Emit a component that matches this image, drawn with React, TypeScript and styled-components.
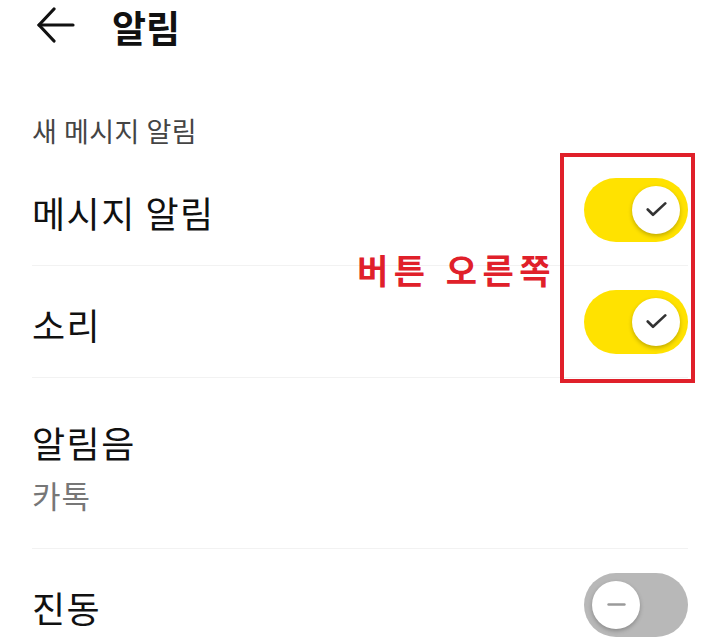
import React from "react"
import styled, { createGlobalStyle } from "styled-components"

const GlobalStyle = createGlobalStyle`
    html, body {
        margin: 0;
        padding: 0;
        background: #FFFFFF;
    }
    body {
        font-family: "Noto Sans CJK KR", "Noto Sans", sans-serif;
        color: #111111;
    }
`

const Toggle = ({ on }: { on: boolean }) => {
    return (
        <Switch $on={on}>
            <Knob>
                {on ? (
                    <svg viewBox="0 0 24 24" fill="none" stroke="#333333" strokeWidth={3} strokeLinecap="round" strokeLinejoin="round">
                        <path d="M2 12l6 6L22 5" />
                    </svg>
                ) : (
                    <svg viewBox="0 0 24 24" fill="none" stroke="#9A9A9A" strokeWidth={3} strokeLinecap="round">
                        <path d="M3 12h18" />
                    </svg>
                )}
            </Knob>
        </Switch>
    )
}

const App = () => {
    return (
        <Page>
            <GlobalStyle />
            {/* 상단 헤더 */}
            <Header>
                <BackButton>
                    <svg viewBox="0 0 40 36" fill="none" stroke="#111111" strokeWidth={3.2} strokeLinecap="round" strokeLinejoin="round">
                        <path d="M37 18H3" />
                        <path d="M18 2L3 18l15 16" />
                    </svg>
                </BackButton>
                <Title>알림</Title>
            </Header>

            <SectionTitle>새 메시지 알림</SectionTitle>

            <List>
                <Row>
                    <Label>메시지 알림</Label>
                    <Toggle on={true} />
                </Row>
                <Row>
                    <Label>소리</Label>
                    <Toggle on={true} />
                </Row>
                <Row $tall>
                    <TextGroup>
                        <Label>알림음</Label>
                        <SubLabel>카톡</SubLabel>
                    </TextGroup>
                </Row>
                <Row>
                    <Label>진동</Label>
                    <Toggle on={false} />
                </Row>
            </List>

            {/* 주석 표시 */}
            <Annotation>버튼 오른쪽</Annotation>
            <Highlight />
        </Page>
    )
}

const Page = styled.div`
    position: relative;
    width: 720px;
    height: 639px;
    overflow: hidden;
    background: #FFFFFF;
`

const Header = styled.div`
    height: 50px;
    display: flex;
    align-items: center;
    padding-left: 36px;
    gap: 36px;
`

const BackButton = styled.div`
    width: 40px;
    height: 36px;
    display: flex;
    align-items: center;
    svg {
        width: 40px;
        height: 36px;
    }
`

const Title = styled.h1`
    margin: 0;
    padding-top: 4px;
    font-size: 37px;
    font-weight: 700;
    line-height: 50px;
`

const SectionTitle = styled.div`
    margin-top: 61px;
    padding-left: 32px;
    height: 40px;
    line-height: 40px;
    font-size: 27px;
    letter-spacing: 0.5px;
    color: #444444;
`

const List = styled.div`
    margin: 3px 32px 0 32px;
`

const Row = styled.div<{ $tall?: boolean }>`
    height: ${p => (p.$tall ? 170 : 111)}px;
    display: flex;
    align-items: center;
    justify-content: space-between;
    border-bottom: 1.5px solid #F2F2F2;
    &:last-child {
        border-bottom: none;
    }
`

const TextGroup = styled.div`
    display: flex;
    flex-direction: column;
    gap: 10px;
    padding-top: 4px;
`

const Label = styled.span`
    padding-top: 4px;
    font-size: 36px;
    line-height: 46px;
    letter-spacing: 1.5px;
    color: #111111;
`

const SubLabel = styled.span`
    font-size: 31px;
    line-height: 40px;
    letter-spacing: 1px;
    color: #777777;
`

const Switch = styled.div<{ $on: boolean }>`
    width: 104px;
    height: 64px;
    border-radius: 32px;
    background: ${p => (p.$on ? "#FFE200" : "#B8B8B8")};
    display: flex;
    align-items: center;
    justify-content: ${p => (p.$on ? "flex-end" : "flex-start")};
    padding: 0 8px;
    box-sizing: border-box;
    flex-shrink: 0;
`

const Knob = styled.div`
    width: 48px;
    height: 48px;
    border-radius: 50%;
    background: #FFFFFF;
    box-shadow: 0 2px 4px rgba(0, 0, 0, 0.25);
    display: flex;
    align-items: center;
    justify-content: center;
    svg {
        width: 21px;
        height: 21px;
    }
`

const Annotation = styled.div`
    position: absolute;
    left: 357px;
    top: 245px;
    font-size: 34px;
    font-weight: 700;
    line-height: 50px;
    color: #E0202A;
    letter-spacing: 5.5px;
    word-spacing: 2px;
`

const Highlight = styled.div`
    position: absolute;
    left: 560px;
    top: 153px;
    width: 135px;
    height: 230px;
    box-sizing: border-box;
    border: 4px solid #E0202A;
`

export default App
